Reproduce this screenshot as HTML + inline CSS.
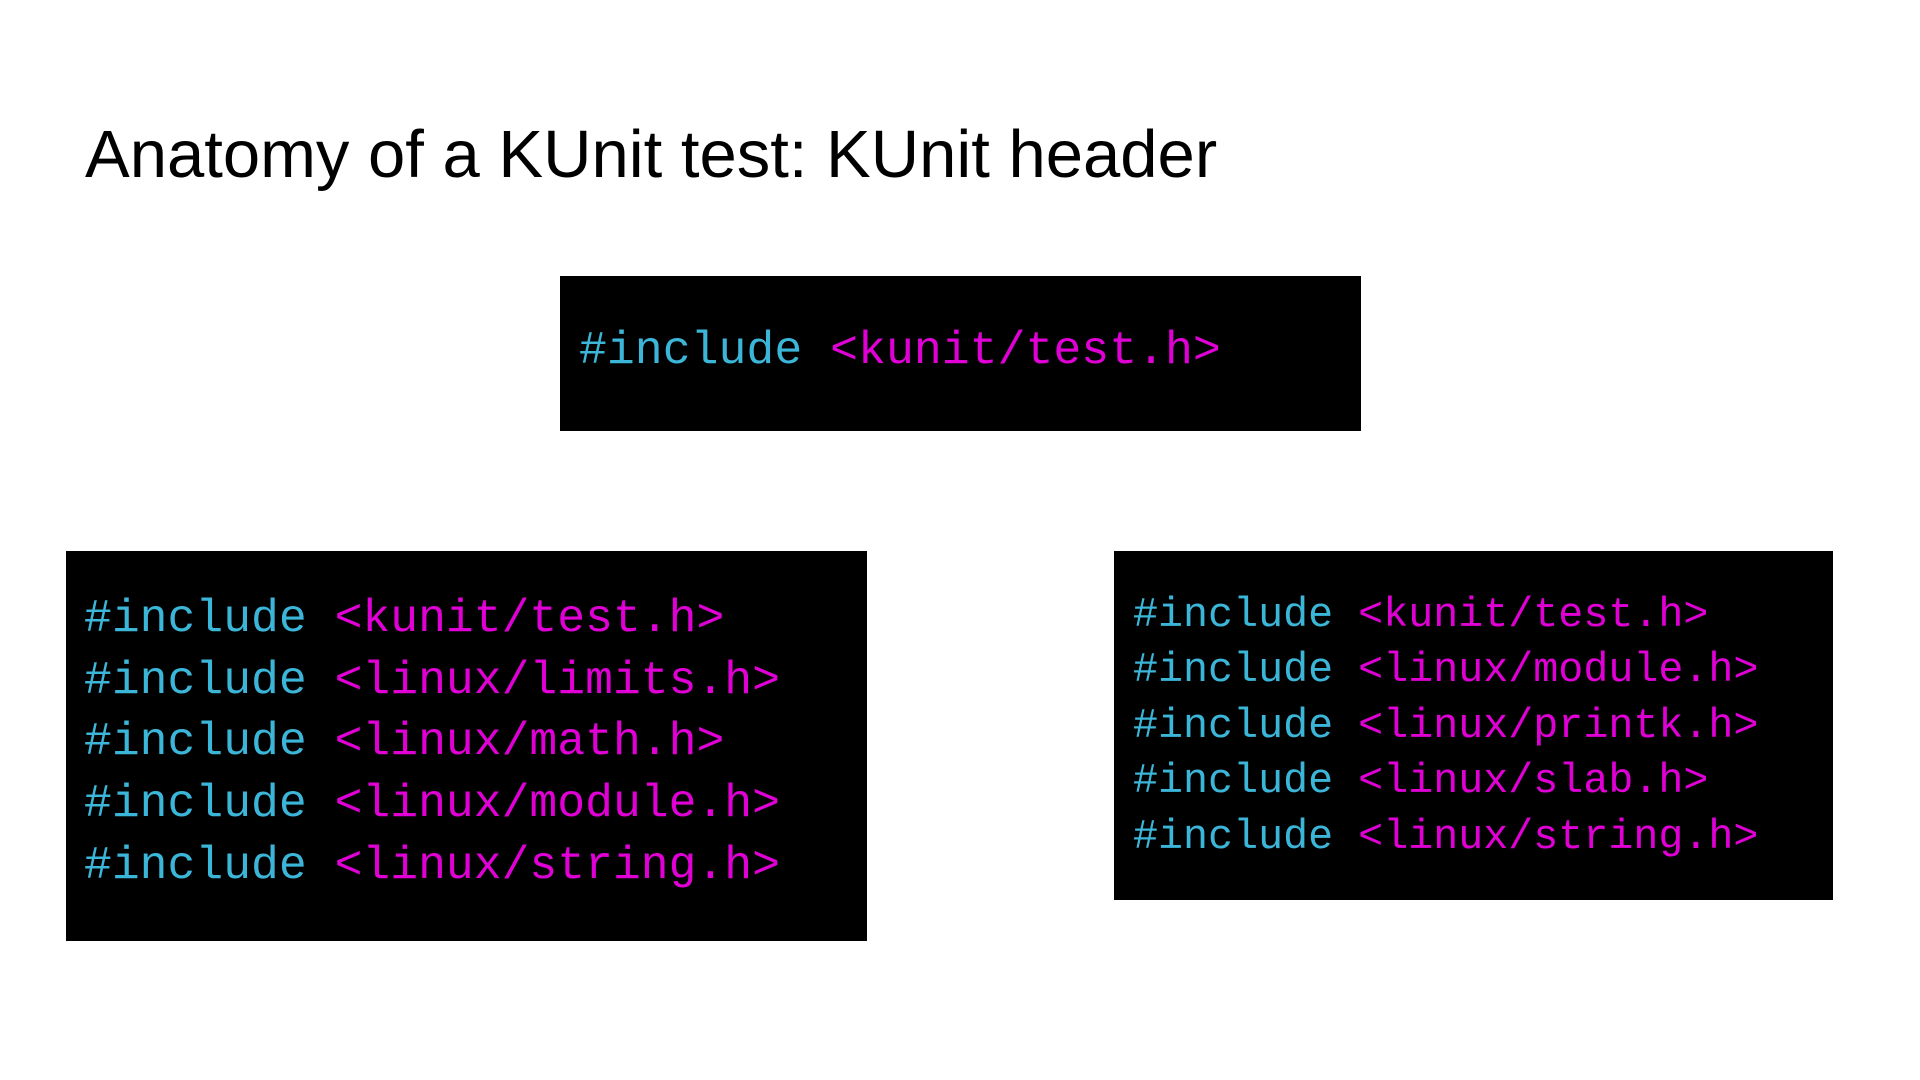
<!DOCTYPE html>
<html><head><meta charset="utf-8"><style>
body{margin:0;width:1920px;height:1080px;background:#fff;position:relative;overflow:hidden;font-family:"Liberation Sans",sans-serif}
.t{position:absolute;left:85px;top:116px;font-size:67px;color:#000;white-space:nowrap}
.b{position:absolute;background:#000}
.c{position:absolute;font-family:"Liberation Mono",monospace;white-space:pre}
.k{color:#3cb6d8}.m{color:#e000d6}
</style></head><body>
<div class="t">Anatomy of a KUnit test: KUnit header</div>
<div class="b" style="left:560px;top:276px;width:801px;height:155px"></div>
<div class="c" style="left:579px;top:327px;font-size:46.5px;line-height:47px"><span class="k">#include</span> <span class="m">&lt;kunit/test.h&gt;</span></div>
<div class="b" style="left:66px;top:551px;width:801px;height:390px"></div>
<div class="c" style="left:84px;top:588px;font-size:46.4px;line-height:61.7px"><span class="k">#include</span> <span class="m">&lt;kunit/test.h&gt;</span>
<span class="k">#include</span> <span class="m">&lt;linux/limits.h&gt;</span>
<span class="k">#include</span> <span class="m">&lt;linux/math.h&gt;</span>
<span class="k">#include</span> <span class="m">&lt;linux/module.h&gt;</span>
<span class="k">#include</span> <span class="m">&lt;linux/string.h&gt;</span></div>
<div class="b" style="left:1114px;top:551px;width:719px;height:349px"></div>
<div class="c" style="left:1133px;top:588px;font-size:41.7px;line-height:55.4px"><span class="k">#include</span> <span class="m">&lt;kunit/test.h&gt;</span>
<span class="k">#include</span> <span class="m">&lt;linux/module.h&gt;</span>
<span class="k">#include</span> <span class="m">&lt;linux/printk.h&gt;</span>
<span class="k">#include</span> <span class="m">&lt;linux/slab.h&gt;</span>
<span class="k">#include</span> <span class="m">&lt;linux/string.h&gt;</span></div>
</body></html>
